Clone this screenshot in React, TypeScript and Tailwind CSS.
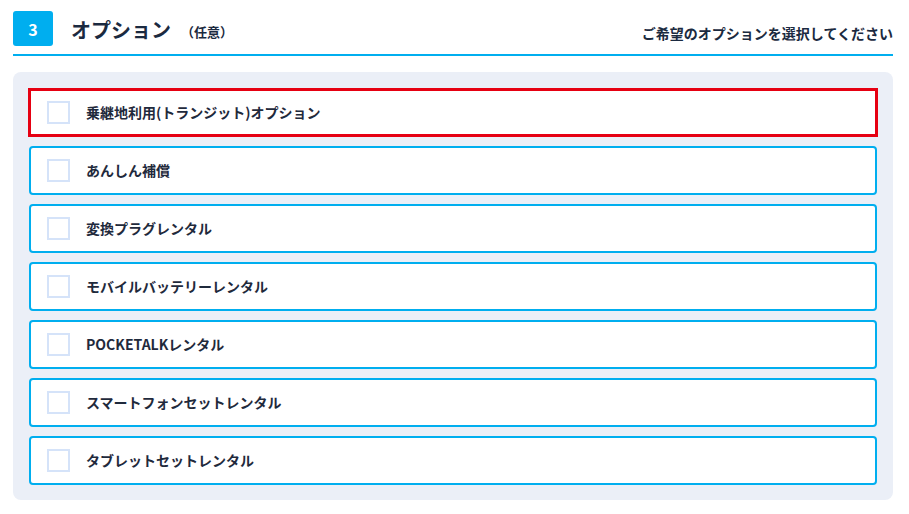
import React from 'react';

const options = [
  '乗継地利用(トランジット)オプション',
  'あんしん補償',
  '変換プラグレンタル',
  'モバイルバッテリーレンタル',
  'POCKETALKレンタル',
  'スマートフォンセットレンタル',
  'タブレットセットレンタル',
];

const App = () => {
  return (
    <div
      className="w-[909px] h-[514px] bg-white pl-[13px] pr-[16px] pt-[11px]"
      style={{ fontFamily: '"Noto Sans CJK JP", "Noto Sans", sans-serif' }}
    >
      {/* Section heading */}
      <div className="flex items-center justify-between pb-[8px] border-b-2 border-[#00aeef]">
        <div className="flex items-center">
          <div className="w-[40px] h-[35px] rounded-[3px] bg-[#00aeef] flex items-center justify-center text-white font-bold text-[16px]">
            3
          </div>
          <span className="ml-[18px] text-[20px] font-bold text-[#1b2a40] leading-none pt-[3px]">オプション</span>
          <span className="ml-[10px] text-[13px] font-bold text-[#1b2a40] leading-none pt-[6px]">（任意）</span>
        </div>
        <span className="text-[14px] font-bold text-[#1b2a40] pt-[10px]">ご希望のオプションを選択してください</span>
      </div>

      {/* Options panel */}
      <div className="mt-[16px] bg-[#ebeff7] rounded-[8px] px-[16px] pt-[16px] pb-[15px] flex flex-col gap-[9px]">
        {options.map((label, i) => (
          <label
            key={label}
            className={`h-[49px] bg-white flex items-center cursor-pointer ${
              i === 0 ? 'border-[3px] border-[#e60012] -mx-[1px]' : 'border-2 border-[#00aeef] rounded-[4px]'
            }`}
          >
            <span className="ml-[16px] w-[23px] h-[23px] border-2 border-[#d5e3f9] bg-white" />
            <span className="ml-[16px] text-[14px] font-bold text-[#1f2a3c]">{label}</span>
          </label>
        ))}
      </div>
    </div>
  );
};

export default App;
